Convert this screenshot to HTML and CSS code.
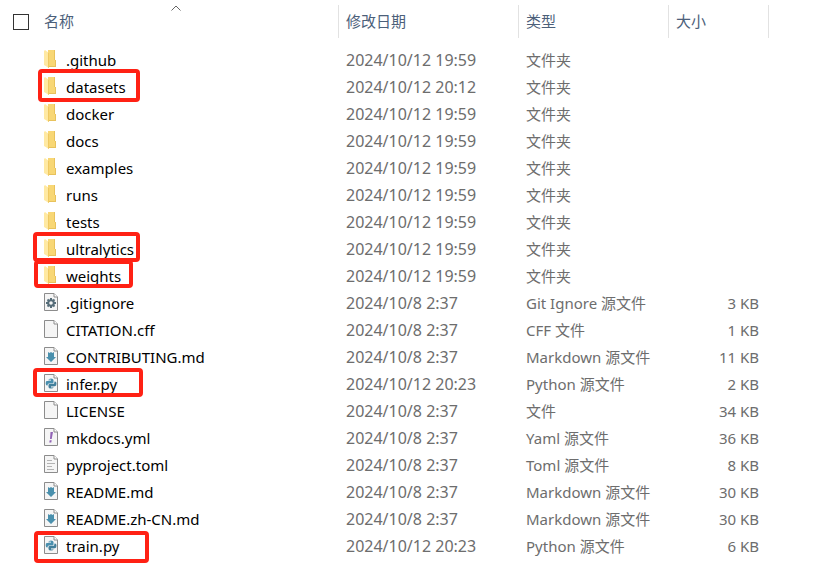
FILE: index.html
```html
<!DOCTYPE html>
<html lang="zh-CN">
<head>
  <meta charset="UTF-8">
  <meta name="viewport" content="width=device-width, initial-scale=1.0">
  <title>ultralytics</title>
  <link rel="stylesheet" href="styles.css">
</head>
<body>

  <svg class="sprite" aria-hidden="true">
    <symbol id="folder" viewBox="0 0 14 18">
      <path fill="#e8c25c" d="M4 0h7v10h1v7H4z"/>
      <path fill="#f8d775" d="M4 0h6v10h1v6H4z"/>
      <path fill="#ffe9a2" d="M0 1l1-1 4 3v15L0 15z"/>
      <path fill="#efc963" d="M4 2.300L5 3v15l-1-.600z"/>
    </symbol>
    <symbol id="page" viewBox="0 0 14 18">
      <path fill="#f5f5f5" stroke="#8c8c8c" d="M.500.500h9.500l3.500 3.500v13.500H.500z"/>
      <path fill="#fff" stroke="#8c8c8c" d="M10 .500V4h3.500"/>
    </symbol>
    <symbol id="gear" viewBox="0 0 14 18">
      <use href="#page"/>
      <circle cx="7" cy="10" r="2.800" fill="none" stroke="#566d79" stroke-width="2"/>
      <path stroke="#566d79" stroke-width="2" d="M7 5v2M7 13v2M2 10h2M10 10h2M3.500 6.500l1.400 1.400M9.100 12.100l1.400 1.400M3.500 13.500l1.400-1.400M9.100 7.900l1.400-1.400"/>
    </symbol>
    <symbol id="markdown" viewBox="0 0 14 18">
      <use href="#page"/>
      <path fill="#4a90ad" d="M4 5l1.500 1L7 5l1.500 1L10 5v5h2l-5 5-5-5h2z"/>
    </symbol>
    <symbol id="python" viewBox="0 0 14 18">
      <use href="#page"/>
      <path fill="#4a8fae" d="M4.500 6q0-1.500 2.500-1.500T9.500 6v2.500q0 1-1 1H5q-1.500 0-1.500 2H3q-1.300 0-1.300-2.300T3 7h4v-.600H4.500z"/>
      <path fill="#437f9b" d="M9.500 13q0 1.500-2.500 1.500T4.500 13v-2q0-1 1-1H9q1.500 0 1.500-2.500h.500q1.500 0 1.500 2.300T11 12.200H7v.600h2.500z"/>
      <circle cx="6" cy="5.800" r=".600" fill="#fff"/>
      <circle cx="8" cy="13.200" r=".600" fill="#fff"/>
    </symbol>
    <symbol id="yaml" viewBox="0 0 14 18">
      <use href="#page"/>
      <path fill="#9163b5" d="M6.500 4H9l-1.300 7H6zM5.700 12.300h2l-.400 2.200h-2z"/>
    </symbol>
    <symbol id="text" viewBox="0 0 14 18">
      <use href="#page"/>
      <path stroke="#b3b3b3" d="M3 5.500h5M3 8.500h8M3 11.500h5M3 14.500h7"/>
    </symbol>
  </svg>

  <table class="files">
    <colgroup>
      <col>
      <col class="col-date">
      <col class="col-type">
      <col class="col-size">
      <col class="col-rest">
    </colgroup>
    <thead>
      <tr>
        <th scope="col">
          <div class="name-head">
            <input class="check" type="checkbox" id="select-all" aria-label="全选">
            <label for="select-all">名称</label>
            <svg class="sort" viewBox="0 0 10 6" aria-hidden="true"><path fill="none" stroke="#666" d="M.500 5.500L5 1l4.500 4.500"/></svg>
          </div>
        </th>
        <th scope="col"><div class="head">修改日期</div></th>
        <th scope="col"><div class="head">类型</div></th>
        <th scope="col"><div class="head">大小</div></th>
        <td><div class="head"></div></td>
      </tr>
    </thead>
    <tbody>
      <tr>
        <td><div class="file"><svg class="icon"><use href="#folder"/></svg>.github</div></td>
        <td class="date">2024/10/12 19:59</td><td>文件夹</td><td></td><td></td>
      </tr>
      <tr>
        <td><div class="file"><svg class="icon"><use href="#folder"/></svg>datasets<span class="mark mark-datasets"></span></div></td>
        <td class="date">2024/10/12 20:12</td><td>文件夹</td><td></td><td></td>
      </tr>
      <tr>
        <td><div class="file"><svg class="icon"><use href="#folder"/></svg>docker</div></td>
        <td class="date">2024/10/12 19:59</td><td>文件夹</td><td></td><td></td>
      </tr>
      <tr>
        <td><div class="file"><svg class="icon"><use href="#folder"/></svg>docs</div></td>
        <td class="date">2024/10/12 19:59</td><td>文件夹</td><td></td><td></td>
      </tr>
      <tr>
        <td><div class="file"><svg class="icon"><use href="#folder"/></svg>examples</div></td>
        <td class="date">2024/10/12 19:59</td><td>文件夹</td><td></td><td></td>
      </tr>
      <tr>
        <td><div class="file"><svg class="icon"><use href="#folder"/></svg>runs</div></td>
        <td class="date">2024/10/12 19:59</td><td>文件夹</td><td></td><td></td>
      </tr>
      <tr>
        <td><div class="file"><svg class="icon"><use href="#folder"/></svg>tests</div></td>
        <td class="date">2024/10/12 19:59</td><td>文件夹</td><td></td><td></td>
      </tr>
      <tr>
        <td><div class="file"><svg class="icon"><use href="#folder"/></svg>ultralytics<span class="mark mark-ultralytics"></span></div></td>
        <td class="date">2024/10/12 19:59</td><td>文件夹</td><td></td><td></td>
      </tr>
      <tr>
        <td><div class="file"><svg class="icon"><use href="#folder"/></svg>weights<span class="mark mark-weights"></span></div></td>
        <td class="date">2024/10/12 19:59</td><td>文件夹</td><td></td><td></td>
      </tr>
      <tr>
        <td><div class="file"><svg class="icon"><use href="#gear"/></svg>.gitignore</div></td>
        <td class="date">2024/10/8 2:37</td><td>Git Ignore 源文件</td><td class="size">3 KB</td><td></td>
      </tr>
      <tr>
        <td><div class="file"><svg class="icon"><use href="#page"/></svg>CITATION.cff</div></td>
        <td class="date">2024/10/8 2:37</td><td>CFF 文件</td><td class="size">1 KB</td><td></td>
      </tr>
      <tr>
        <td><div class="file"><svg class="icon"><use href="#markdown"/></svg>CONTRIBUTING.md</div></td>
        <td class="date">2024/10/8 2:37</td><td>Markdown 源文件</td><td class="size">11 KB</td><td></td>
      </tr>
      <tr>
        <td><div class="file"><svg class="icon"><use href="#python"/></svg>infer.py<span class="mark mark-infer"></span></div></td>
        <td class="date">2024/10/12 20:23</td><td>Python 源文件</td><td class="size">2 KB</td><td></td>
      </tr>
      <tr>
        <td><div class="file"><svg class="icon"><use href="#page"/></svg>LICENSE</div></td>
        <td class="date">2024/10/8 2:37</td><td>文件</td><td class="size">34 KB</td><td></td>
      </tr>
      <tr>
        <td><div class="file"><svg class="icon"><use href="#yaml"/></svg>mkdocs.yml</div></td>
        <td class="date">2024/10/8 2:37</td><td>Yaml 源文件</td><td class="size">36 KB</td><td></td>
      </tr>
      <tr>
        <td><div class="file"><svg class="icon"><use href="#text"/></svg>pyproject.toml</div></td>
        <td class="date">2024/10/8 2:37</td><td>Toml 源文件</td><td class="size">8 KB</td><td></td>
      </tr>
      <tr>
        <td><div class="file"><svg class="icon"><use href="#markdown"/></svg>README.md</div></td>
        <td class="date">2024/10/8 2:37</td><td>Markdown 源文件</td><td class="size">30 KB</td><td></td>
      </tr>
      <tr>
        <td><div class="file"><svg class="icon"><use href="#markdown"/></svg>README.zh-CN.md</div></td>
        <td class="date">2024/10/8 2:37</td><td>Markdown 源文件</td><td class="size">30 KB</td><td></td>
      </tr>
      <tr>
        <td><div class="file"><svg class="icon"><use href="#python"/></svg>train.py<span class="mark mark-train"></span></div></td>
        <td class="date">2024/10/12 20:23</td><td>Python 源文件</td><td class="size">6 KB</td><td></td>
      </tr>
    </tbody>
  </table>

</body>
</html>
```
FILE: styles.css
```css
body {
  margin: 0;
  padding-bottom: 12px;
  background-color: #fff;
  color: #6d6d6d;
  font-family: "Noto Sans", "Noto Sans CJK SC", sans-serif;
  font-size: 15px;
  line-height: 27px;
}

.sprite {
  display: none;
}

.files {
  width: 100%;
  table-layout: fixed;
  border-collapse: collapse;
}

.col-date { width: 180px; }
.col-type { width: 150px; }
.col-size { width: 100px; }
.col-rest { width: 51px; }

th, td {
  padding: 0;
  text-align: left;
  font-weight: normal;
  white-space: nowrap;
}

tbody td {
  height: 27px;
  padding-left: 8px;
}

/* cabeçalho */
thead th, thead td {
  height: 47px;
  padding: 5px 0 9px;
  box-sizing: border-box;
  color: #4c607a;
}

.head {
  height: 33px;
  line-height: 33px;
  padding-left: 7px;
  border-left: 1px solid #e2e2e2;
}

.name-head {
  position: relative;
  display: flex;
  align-items: center;
  gap: 15px;
  height: 33px;
  margin-left: 13px;
}

.check {
  appearance: none;
  width: 16px;
  height: 16px;
  margin: 0;
  border: 1px solid #333;
  background-color: #fff;
}

.check:checked {
  background-color: #0078d7;
}

.sort {
  position: absolute;
  top: 0;
  left: 50%;
  width: 10px;
  height: 6px;
  margin-left: -5px;
}

/* linhas */
.file {
  position: relative;
  display: flex;
  align-items: center;
  gap: 8px;
  height: 27px;
  padding-left: 36px;
  color: #000;
}

.icon {
  width: 14px;
  height: 18px;
  margin-bottom: 3px;
}

tbody td.date {
  font-size: 16px;
}

tbody td.size {
  padding-right: 9px;
  text-align: right;
}

/* marcações em vermelho */
.mark {
  position: absolute;
  box-sizing: border-box;
  border: 4px solid #ff2114;
  border-radius: 4px;
  pointer-events: none;
}

.mark-datasets { top: -5px; left: 30px; width: 102px; height: 33px; }
.mark-ultralytics { top: -4px; left: 25px; width: 107px; height: 30px; }
.mark-weights { top: -3px; left: 26px; width: 99px; height: 28px; }
.mark-infer { top: -3px; left: 25px; width: 110px; height: 29px; }
.mark-train { top: -2px; left: 26px; width: 115px; height: 32px; }
```
